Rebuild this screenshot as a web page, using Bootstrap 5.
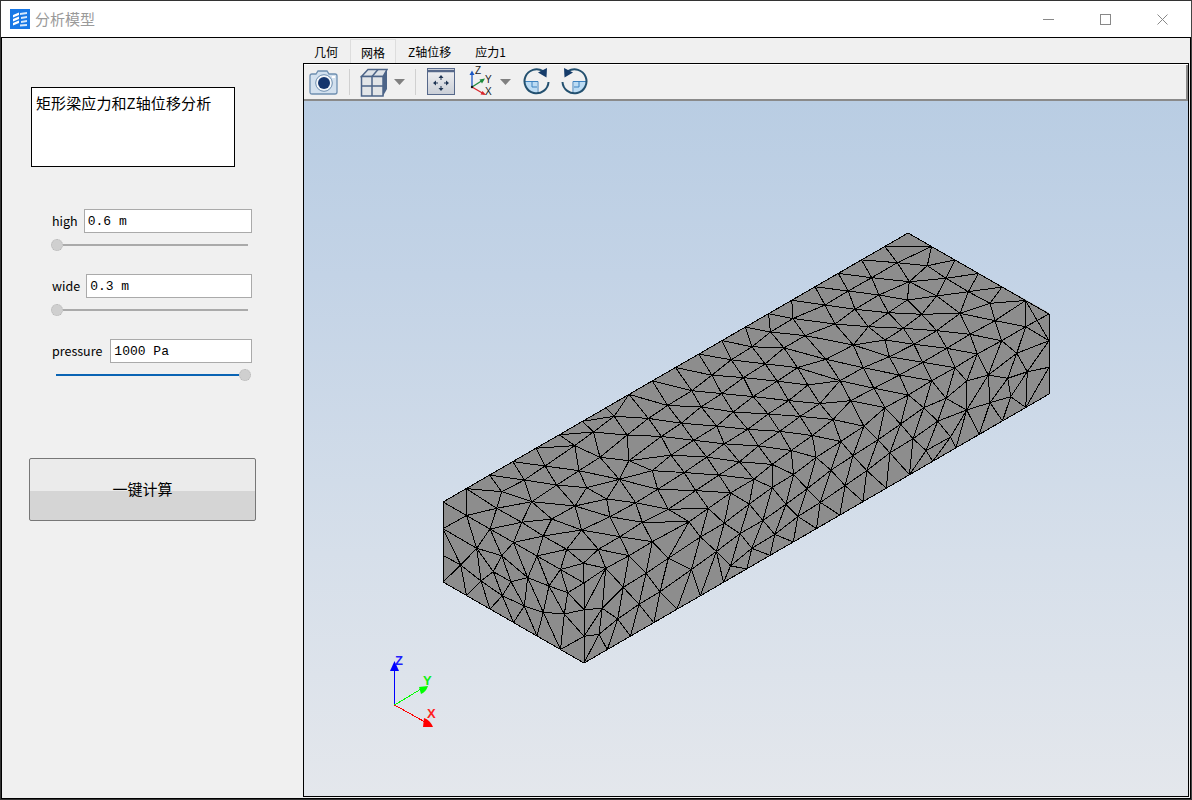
<!DOCTYPE html>
<html lang="zh">
<head>
<meta charset="utf-8">
<title>分析模型</title>
<link href="https://cdn.jsdelivr.net/npm/bootstrap@5.3.0/dist/css/bootstrap.min.css" rel="stylesheet">
<style>
html,body{margin:0;height:800px;overflow:hidden;background:#fff}
body{font-family:"Noto Sans CJK SC","Noto Sans",sans-serif;color:#000}
.app-window{width:1192px;height:800px;border:1px solid #333;border-right-color:#444;background:#fff}
.title-strip{height:36px;flex:none;padding-left:9px}
.title-logo{width:20px;height:20px;display:block}
.title-name{font-size:15px;color:#9a9a9a;margin-left:5px;letter-spacing:0}
.win-btn{width:57px;height:36px;color:#888}
.win-btns{padding-right:0}
.work-area{flex:1 1 auto;min-height:0;border:1px solid #000;background:#f0f0f0}
.side-panel{width:301px;flex:none}
.note-box{width:204px;height:80px;margin:49px 0 0 29px;background:#fff;border:1px solid #000;font-size:15px;letter-spacing:.1px;line-height:20px;padding:5px 4px}
.ctl-row{margin-left:50px;width:200px;height:24px}
.ctl-first{margin-top:42px}
.ctl-next{margin-top:23px}
.ctl-label{font-size:12.5px;line-height:24px;white-space:nowrap;margin-right:6px}
.ctl-label.wider{margin-right:8px}
.ctl-input{flex:1 1 auto;min-width:0;height:24px;border:1px solid #aaa;border-radius:0;padding:1px 3px 0;font:13px/22px "Liberation Mono",monospace;color:#000;background:#fff;outline:0}
.ctl-slider{margin-top:6px;height:12px;margin-left:49px;width:197px}
.ctl-slider.at-end{margin-left:54px;width:195px}
.knob{width:12px;height:12px;border-radius:50%;background:#cfcfcf;border:1px dotted #b5b5b5;flex:none}
.rail{height:2px;flex:1 1 auto;background:#aaa}
.rail.filled{background:#0a64b4}
.calc-btn{display:block;width:227px;height:63px;margin:77px 0 0 27px;padding:0;border:1px solid #777;border-radius:2px;font-size:15px;color:#000;background:linear-gradient(#ebebeb 0,#ebebeb 52%,#d5d5d5 52%,#d5d5d5 100%)}
.calc-btn:hover,.calc-btn:active{color:#000;border-color:#777}
.view-col{flex:1 1 auto;min-width:0;padding-right:1px;padding-bottom:1px}
.tab-strip{height:25px;flex:none;font-size:12px}
.tab-item{display:block;line-height:25px;padding:0 12px;color:#000;text-decoration:none;height:24px;margin-top:1px}
.tab-item:first-child{padding-left:11px}
.tab-item.on{background:#f2f2f2;border:1px solid #ddd;border-bottom:0;padding:0 10px}
.view-frame{flex:1 1 auto;min-height:0;border:1px solid #000;background:#fff}
.tool-strip{height:36px;flex:none;background:#f0f0f0;border-bottom:2px solid #8a8a8a;border-right:2px solid #8a8a8a;padding-left:5px;margin-top:1px}
.tool-strip svg{display:block;height:34px;flex:none}
.tool-sep{width:1px;height:26px;background:#d0d0d0;flex:none}
.ml5{margin-left:5px}.ml6{margin-left:6px}.ml10{margin-left:10px}.ml11{margin-left:11px}.ml12{margin-left:12px}.ml14{margin-left:14px}
.scene-box{flex:1 1 auto;min-height:0;background:linear-gradient(#b9cde3 0,#c3d3e6 25%,#d6dfea 65%,#e4e7ec 100%)}
.scene-svg{display:block;width:883px;height:695px}
.tri-letter{font:bold 13px "Liberation Sans",sans-serif}
.mini-letter{font:10px "Liberation Sans",sans-serif;fill:#222}
</style>
</head>
<body>
<div class="app-window d-flex flex-column">
  <div class="title-strip d-flex align-items-center">
    <svg class="title-logo" viewBox="0 0 20 20"><rect width="20" height="20" fill="#1878e6"/><path d="M3 6 9 3.500 9 6 3 8.500ZM3 10 9 7.500 9 10 3 12.500ZM3 14 9 11.500 9 14 3 16.500Z" fill="#fff"/><path d="M10 4 17 3 17 5 10 6ZM11 8 17 7 17 9 11 10ZM11 12 17 11 17 13 11 14ZM10 15.500 17 15 17 17 10 17.500Z" fill="#d5e8fc"/></svg>
    <span class="title-name">分析模型</span>
    <div class="win-btns d-flex ms-auto">
      <div class="win-btn d-flex align-items-center justify-content-center"><svg width="11" height="11" viewBox="0 0 11 11"><path d="M0 5.500H11" stroke="currentColor"/></svg></div>
      <div class="win-btn d-flex align-items-center justify-content-center"><svg width="11" height="11" viewBox="0 0 11 11"><rect x=".5" y=".5" width="10" height="10" fill="none" stroke="currentColor"/></svg></div>
      <div class="win-btn d-flex align-items-center justify-content-center"><svg width="11" height="11" viewBox="0 0 11 11"><path d="M.5.500 10.500 10.500M10.500.500.500 10.500" stroke="currentColor"/></svg></div>
    </div>
  </div>
  <div class="work-area d-flex">
    <div class="side-panel">
      <div class="note-box">矩形梁应力和Z轴位移分析</div>
      <div class="ctl-row ctl-first d-flex"><span class="ctl-label">high</span><input class="ctl-input" value="0.6 m"></div>
      <div class="ctl-slider d-flex align-items-center"><span class="knob"></span><span class="rail"></span></div>
      <div class="ctl-row ctl-next d-flex"><span class="ctl-label">wide</span><input class="ctl-input" value="0.3 m"></div>
      <div class="ctl-slider d-flex align-items-center"><span class="knob"></span><span class="rail"></span></div>
      <div class="ctl-row ctl-next d-flex"><span class="ctl-label wider">pressure</span><input class="ctl-input" value="1000 Pa"></div>
      <div class="ctl-slider at-end d-flex align-items-center"><span class="rail filled"></span><span class="knob"></span></div>
      <button type="button" class="btn calc-btn">一键计算</button>
    </div>
    <div class="view-col d-flex flex-column">
      <div class="tab-strip d-flex">
        <a class="tab-item" href="#">几何</a>
        <a class="tab-item on" href="#">网格</a>
        <a class="tab-item" href="#">Z轴位移</a>
        <a class="tab-item" href="#">应力1</a>
      </div>
      <div class="view-frame d-flex flex-column">
        <div class="tool-strip d-flex align-items-center">
          <svg width="30" viewBox="0 0 30 34"><path d="M3 9H7L9 6H18L20 9H26Q28 9 28 11V27Q28 29 26 29H3Q1 29 1 27V11Q1 9 3 9Z" fill="#d3e1ef" stroke="#6f8fb0" stroke-width="1.300"/><circle cx="15" cy="18" r="8.300" fill="#f4f7fa" stroke="#6f8fb0"/><circle cx="15" cy="18" r="6" fill="#16366e"/><rect x="23" y="11" width="3" height="2" fill="#fff"/></svg>
          <span class="tool-sep ml10"></span>
          <svg class="ml10" width="28" viewBox="0 0 28 34"><path d="M1.500 11.500 8 4.500H27L23 11.500Z" fill="#dfe3e8" stroke="#4c6488" stroke-width="1.500"/><path d="M23 11.500 27 4.500V24L23 31Z" fill="#4c6488"/><path d="M1.500 11.500H23V31H1.500Z" fill="#e2e5e8" stroke="#4c6488" stroke-width="1.500"/><path d="M12 11.500V31M1.500 21H23M12 11.500 18 4.500" stroke="#4c6488" stroke-width="1.500" fill="none"/></svg>
          <svg class="ml6" width="11" viewBox="0 0 11 34"><path d="M0 14H11L5.500 20Z" fill="#808080"/></svg>
          <span class="tool-sep ml10"></span>
          <svg class="ml11" width="28" viewBox="0 0 28 34"><defs><linearGradient id="fitg" x1="0" y1="0" x2="0" y2="1"><stop offset="0" stop-color="#f2f2f4"/><stop offset="1" stop-color="#c9ced6"/></linearGradient></defs><rect x=".5" y="3.500" width="27" height="26" fill="url(#fitg)" stroke="#56688a"/><path d="M1 6H27" stroke="#56688a" stroke-width="2.500"/><path d="M14 10 11.500 13H16.500ZM14 26 11.500 23H16.500ZM6 18 9 15.500V20.500ZM22 18 19 15.500V20.500Z" fill="#1f3554"/><path d="M14 13V15M14 21V23M9 18H11M17 18H19" stroke="#1f3554"/></svg>
          <svg class="ml14" width="26" viewBox="0 0 26 34"><g fill="none" stroke-width="1.300"><path d="M3 22V9" stroke="#1a56c4"/><path d="M3 22 14 15" stroke="#1d8a3c"/><path d="M3 22 15 29" stroke="#d8262c"/></g><path d="M3 5.500 .5 10H5.500Z" fill="#1a56c4"/><path d="M16 13.500 10.500 14.500 13 18.500Z" fill="#1d8a3c"/><path d="M17 30 11.500 29.500 13.500 26Z" fill="#d8262c"/><text class="mini-letter" x="6" y="9">Z</text><text class="mini-letter" x="16" y="18">Y</text><text class="mini-letter" x="16" y="30">X</text><circle cx="3" cy="22" r="1.200" fill="#111"/></svg>
          <svg class="ml5" width="11" viewBox="0 0 11 34"><path d="M0 14H11L5.500 20Z" fill="#808080"/></svg>
          <svg class="ml12" width="27" viewBox="0 0 27 34"><path d="M1.500 17H14V29A12 12 0 0 1 1.500 17Z" fill="#bcdcf4"/><path d="M9 17V22H14" fill="none" stroke="#3d82c0"/><path d="M2 16.500H15V29" fill="none" stroke="#3d82c0"/><path d="M20 6.200A12 12 0 1 0 25.500 17" fill="none" stroke="#23506f" stroke-width="2"/><path d="M24 3 23.500 12.500 15 7.500Z" fill="#163c6a"/></svg>
          <svg class="ml11" width="27" viewBox="0 0 27 34"><path d="M25.500 17H13V29A12 12 0 0 0 25.500 17Z" fill="#bcdcf4"/><path d="M18 17V22H13" fill="none" stroke="#3d82c0"/><path d="M25 16.500H12V29" fill="none" stroke="#3d82c0"/><path d="M7 6.200A12 12 0 1 1 1.500 17" fill="none" stroke="#23506f" stroke-width="2"/><path d="M3 3 3.500 12.500 12 7.500Z" fill="#163c6a"/></svg>
        </div>
        <div class="scene-box">
          <svg class="scene-svg" viewBox="304 101 883 695">
            <g id="meshFaces"></g>
            <g shape-rendering="crispEdges" fill="none" stroke-width="1">
              <path d="M394.500 705V670" stroke="#0000ff"/>
              <path d="M394.500 705 421 689" stroke="#00ff00"/>
              <path d="M394.500 705 425 722" stroke="#ff0000"/>
            </g>
            <path d="M394.500 661 390 671H399Z" fill="#0000ff"/>
            <path d="M428 686 419 687 421 694Q426 692 428 686Z" fill="#00ff00"/>
            <path d="M433 727 423 727 424 718Q430 720 433 727Z" fill="#ff0000"/>
            <text class="tri-letter" x="395" y="665" fill="#2020ff">Z</text>
            <text class="tri-letter" x="423" y="685" fill="#10f010">Y</text>
            <text class="tri-letter" x="427" y="718" fill="#ff2020">X</text>
          </svg>
        </div>
      </div>
    </div>
  </div>
</div>
<script src="https://cdn.jsdelivr.net/npm/bootstrap@5.3.0/dist/js/bootstrap.bundle.min.js"></script>
<script>
(function(){
  var seed=12345;
  function rnd(){seed=(seed*16807)%2147483647;return seed/2147483647;}
  function delaunay(p){
    var n=p.length,pts=p.concat([[-500,-500],[1500,-500],[100,1500]]);
    var tris=[[n,n+1,n+2]];
    function circ(t){
      var a=pts[t[0]],b=pts[t[1]],c=pts[t[2]];
      var d=2*(a[0]*(b[1]-c[1])+b[0]*(c[1]-a[1])+c[0]*(a[1]-b[1]));
      var A=a[0]*a[0]+a[1]*a[1],B=b[0]*b[0]+b[1]*b[1],C=c[0]*c[0]+c[1]*c[1];
      var x=(A*(b[1]-c[1])+B*(c[1]-a[1])+C*(a[1]-b[1]))/d,y=(A*(c[0]-b[0])+B*(a[0]-c[0])+C*(b[0]-a[0]))/d;
      return [x,y,(a[0]-x)*(a[0]-x)+(a[1]-y)*(a[1]-y)];
    }
    for(var i=0;i<n;i++){
      var q=pts[i],keep=[],edges={};
      tris.forEach(function(t){
        var c=circ(t);
        if((q[0]-c[0])*(q[0]-c[0])+(q[1]-c[1])*(q[1]-c[1])<c[2]){
          [[t[0],t[1]],[t[1],t[2]],[t[2],t[0]]].forEach(function(e){
            var k=Math.min(e[0],e[1])+"_"+Math.max(e[0],e[1]);
            edges[k]=(edges[k]||0)+1;
          });
        } else keep.push(t);
      });
      Object.keys(edges).forEach(function(k){
        if(edges[k]===1){var s=k.split("_");keep.push([+s[0],+s[1],i]);}
      });
      tris=keep;
    }
    return tris.filter(function(t){return t[0]<n&&t[1]<n&&t[2]<n;});
  }
  var lx=23.25,ly=-13.45,sx=23.5,sy=13.5,dy=26.67;
  // unfolded long face: u along the beam, v across the top (0..6) then down the side (6..9)
  function toPage(a){
    var v=a[1];
    return [443+a[0]*lx+Math.min(v,6)*sx, 502+a[0]*ly+Math.min(v,6)*sy+Math.max(v-6,0)*dy];
  }
  function fromPage(X,Y){
    var dx=X-443,dY=Y-502,det=lx*sy-sx*ly;
    var u=(dx*sy-sx*dY)/det,v=(lx*dY-ly*dx)/det;
    if(v>6){u=(dx-6*sx)/lx;v=6+(dY-6*sy-u*ly)/dy;}
    return [u,v];
  }
  function edgePath(nodes,project,skip){
    var pp=nodes.map(function(a){return [a[0]+(rnd()-.5)*.002,a[1]+(rnd()-.5)*.002];});
    var seen={},d="";
    function sc(a){var p=project(a);return p[0].toFixed(1)+" "+p[1].toFixed(1);}
    delaunay(pp).forEach(function(t){
      [[t[0],t[1]],[t[1],t[2]],[t[2],t[0]]].forEach(function(e){
        var k=Math.min(e[0],e[1])+"_"+Math.max(e[0],e[1]);
        if(seen[k])return;seen[k]=1;
        if(skip&&skip(nodes[e[0]],nodes[e[1]]))return;
        d+="M"+sc(nodes[e[0]])+"L"+sc(nodes[e[1]]);
      });
    });
    return d;
  }
  // outer nodes of the unfolded face
  var longNodes=[],i,j;
  for(i=0;i<=20;i++){longNodes.push([i,0]);longNodes.push([i,9]);}
  for(i=1;i<9;i++){longNodes.push([0,i]);longNodes.push([20,i]);}
  // nodes read from the picture: front corner and far corner
  var readA=[[200,175],[305,155],[435,168],[275,217],[365,207],[455,240],[340,258],[410,298],[505,298],[597,317],[540,200],[570,260],[667,275],[637,217],[617,158],[568,88],[530,147],[470,113],[380,105],[283,90],[215,125],[345,48],[447,62],[510,22],[597,32],[667,62],[683,118],[715,178],[460,340],[527,355],[648,370],[580,412],[690,425],[517,475],[627,463],[563,507],[507,553],[715,325]];
  var readB=[[232,113],[322,122],[155,158],[268,170],[378,160],[85,198],[177,210],[262,225],[350,213],[445,200],[510,235],[15,240],[105,253],[205,263],[305,268],[420,265],[525,287],[45,297],[145,305],[250,310],[350,317],[450,328],[545,347],[617,305],[590,385],[622,440],[563,460],[505,450],[440,468],[472,387],[380,370],[282,358],[195,345],[100,360],[18,403],[208,395],[308,412],[405,428],[130,428],[238,450],[335,467],[60,467],[162,490],[265,510],[378,520],[440,555],[510,533],[572,515],[92,527],[195,548]];
  var read=readA.map(function(a){return fromPage(430+a[0]/3,450+a[1]/3);}).concat(readB.map(function(a){return fromPage(820+a[0]/3,225+a[1]/3);}));
  read=read.filter(function(a){return a[0]>.2&&a[0]<19.8&&a[1]>.2&&a[1]<8.8;});
  longNodes=longNodes.concat(read);
  // regular lattice for the middle of the beam
  for(i=-40;i<50;i++)for(j=-30;j<40;j++){
    var x=.35+i*.99+j*.59,y=.3-i*.1+j*.82,ok=x>.45&&x<19.55&&y>.45&&y<8.55;
    if(ok&&read.every(function(a){return Math.hypot(a[0]-x,a[1]-y)>.72;})){
      longNodes.push([x+(rnd()-.5)*.13,y+(rnd()-.5)*.13]);
    }
  }
  // front face: its outer nodes sit exactly on the edges it shares with the long face
  var front=[];
  for(i=0;i<=6;i++){front.push([i,0]);front.push([i,3]);}
  for(i=1;i<3;i++){front.push([0,i]);front.push([6,i]);}
  [[92,345],[140,295],[215,317],[190,365],[153,393],[217,437],[293,383],[243,395],[283,468],[357,408],[413,428],[340,487],[403,492]].forEach(function(a){
    var X=430+a[0]/3,Y=450+a[1]/3,u=(X-443)/sx;
    front.push([u,(Y-502-u*sy)/dy]);
  });
  // the edges shared with the long face are already drawn by it
  function shared(a,b){return (a[1]===0&&b[1]===0)||(a[0]===6&&b[0]===6);}
  var html='<polygon points="443,502 908,233 1049,313 1049,394 584,663 443,582" fill="#8d8d8d"/>'+
    '<path d="'+edgePath(longNodes,toPage)+edgePath(front,function(a){return [443+a[0]*sx,502+a[0]*sy+a[1]*dy];},shared)+'" fill="none" stroke="#000" stroke-width="1" shape-rendering="crispEdges"/>';
  document.getElementById("meshFaces").innerHTML=html;
})();
</script>
</body>
</html>
